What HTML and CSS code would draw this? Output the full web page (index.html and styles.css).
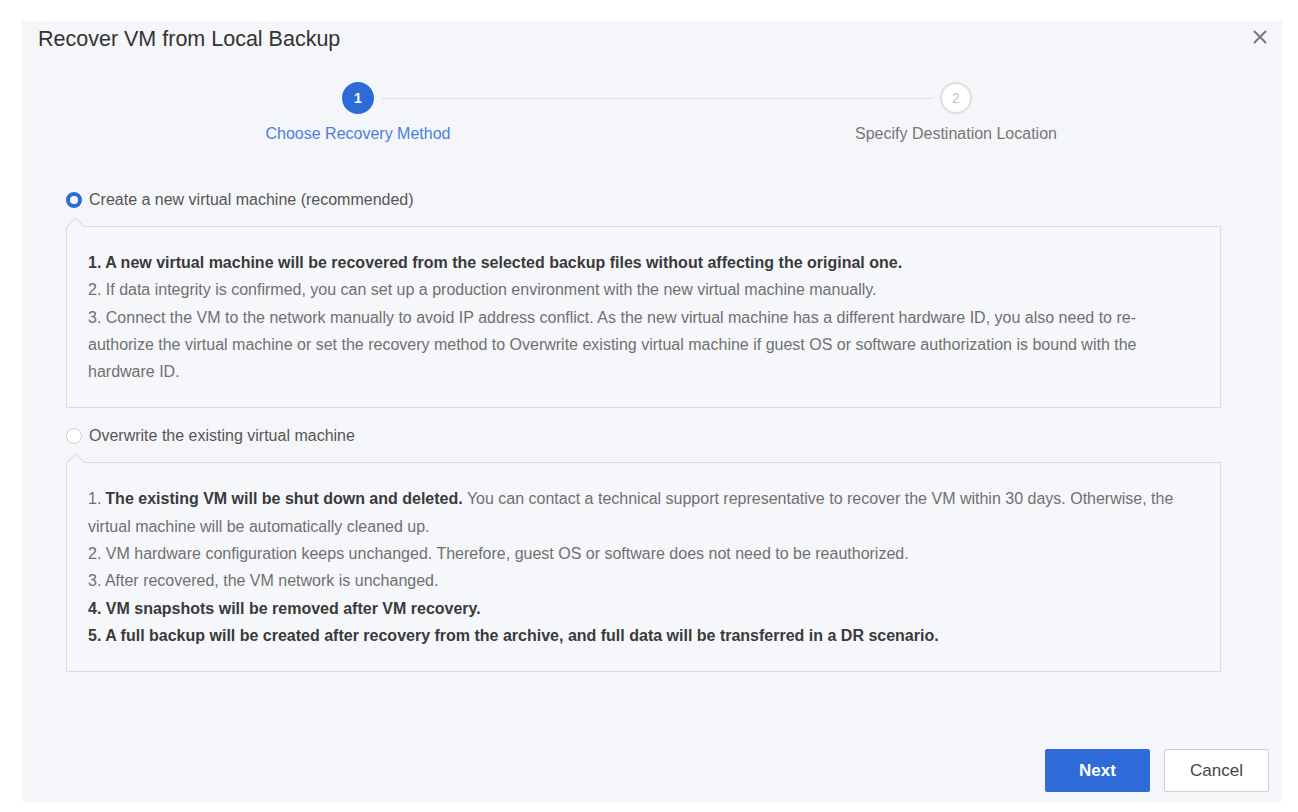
FILE: index.html
```html
<!DOCTYPE html>
<html lang="en">
<head>
    <meta charset="UTF-8">
    <title>Recover VM from Local Backup</title>
    <link rel="stylesheet" href="styles.css">
</head>
<body>
    <div class="dialog">
        <div class="dialog-header">
            <h1 class="dialog-title">Recover VM from Local Backup</h1>
            <button class="close-btn" type="button">
                <svg width="16" height="16" viewBox="0 0 16 16"><path d="M2 2L14 14M14 2L2 14" stroke="#7a7a7a" stroke-width="2" fill="none"/></svg>
            </button>
        </div>

        <div class="steps">
            <div class="step-dot active">1</div>
            <div class="step-line"></div>
            <div class="step-dot">2</div>
            <div class="step-label active">Choose Recovery Method</div>
            <div></div>
            <div class="step-label">Specify Destination Location</div>
        </div>

        <div class="dialog-body">
            <label class="radio-row"><span class="radio checked"></span>Create a new virtual machine (recommended)</label>
            <div class="tip-box">
                <p class="strong">1. A new virtual machine will be recovered from the selected backup files without affecting the original one.</p>
                <p>2. If data integrity is confirmed, you can set up a production environment with the new virtual machine manually.</p>
                <p>3. Connect the VM to the network manually to avoid IP address conflict. As the new virtual machine has a different hardware ID, you also need to re-authorize the virtual machine or set the recovery method to Overwrite existing virtual machine if guest OS or software authorization is bound with the hardware ID.</p>
            </div>

            <label class="radio-row"><span class="radio"></span>Overwrite the existing virtual machine</label>
            <div class="tip-box">
                <p><span class="num">1.</span><b>The existing VM will be shut down and deleted.</b> <span>You can contact a technical support representative to recover the VM within 30 days. Otherwise, the</span> <span>virtual machine will be automatically cleaned up.</span></p>
                <p>2. VM hardware configuration keeps unchanged. Therefore, guest OS or software does not need to be reauthorized.</p>
                <p>3. After recovered, the VM network is unchanged.</p>
                <p class="strong">4. VM snapshots will be removed after VM recovery.</p>
                <p class="strong">5. A full backup will be created after recovery from the archive, and full data will be transferred in a DR scenario.</p>
            </div>
        </div>

        <div class="dialog-footer">
            <button class="btn btn-primary" type="button">Next</button>
            <button class="btn" type="button">Cancel</button>
        </div>
    </div>
</body>
</html>
```

FILE: styles.css
```css
body {
    margin: 0;
    padding: 0;
    background: #fff;
    font-family: "Liberation Sans", Arial, sans-serif;
}
.dialog {
    width: 1260px;
    height: 781px;
    margin: 21px 0 0 22px;
    background: #f5f6f9;
    display: flex;
    flex-direction: column;
}
.dialog-header {
    display: flex;
    justify-content: space-between;
    align-items: flex-start;
    padding: 3px 14px 0 16px;
}
.dialog-title {
    margin: 0;
    font-size: 21.5px;
    font-weight: normal;
    line-height: 30px;
    color: #333;
}
.close-btn {
    margin-top: 5px;
    padding: 0;
    border: none;
    background: none;
    width: 16px;
    height: 16px;
    cursor: pointer;
}
.close-btn svg {
    display: block;
}
.steps {
    display: grid;
    grid-template-columns: 240px 358px 240px;
    grid-template-rows: 32px 20px;
    row-gap: 10px;
    margin: 28px 0 0 216px;
}
.step-dot {
    justify-self: center;
    width: 32px;
    height: 32px;
    box-sizing: border-box;
    border-radius: 50%;
    border: 2px solid #dedede;
    background: #fff;
    color: #c2c2c2;
    font-size: 14px;
    line-height: 28px;
    text-align: center;
}
.step-dot.active {
    border-color: #2e6bd9;
    background: #2e6bd9;
    color: #fff;
    font-weight: bold;
}
.step-line {
    align-self: center;
    margin: 0 -96px 0 -95px;
    border-top: 1px dotted #c9c9c9;
}
.step-label {
    text-align: center;
    font-size: 16px;
    line-height: 20px;
    color: #777;
}
.step-label.active {
    color: #4a7fdf;
}
.dialog-body {
    padding: 46px 61px 0 44px;
}
.radio-row {
    display: flex;
    align-items: center;
    height: 20px;
    font-size: 16px;
    color: #555;
}
.radio {
    width: 16px;
    height: 16px;
    box-sizing: border-box;
    border-radius: 50%;
    border: 1px solid #cfcfcf;
    background: #fff;
    margin-right: 7px;
}
.radio.checked {
    border: 4px solid #2e6bd9;
}
.tip-box {
    position: relative;
    margin: 16px 0 18px;
    padding: 22px 20px 22px 21px;
    border: 1px solid #dcdcdc;
    background: #f6f7fa;
    font-size: 16px;
    line-height: 27.3px;
    color: #707070;
}
.tip-box::before {
    content: "";
    position: absolute;
    left: 2px;
    top: -7px;
    width: 12px;
    height: 12px;
    border-top: 1px solid #dcdcdc;
    border-left: 1px solid #dcdcdc;
    background: #f6f7fa;
    transform: rotate(45deg);
}
.tip-box p {
    margin: 0;
}
.tip-box .num {
    margin-right: 4px;
}
.tip-box .strong, .tip-box b {
    font-weight: bold;
    color: #3a3a3a;
}
.dialog-footer {
    margin-top: auto;
    display: flex;
    justify-content: flex-end;
    gap: 14px;
    padding: 0 13px 10px 0;
}
.btn {
    width: 105px;
    height: 43px;
    font-family: "Liberation Sans", Arial, sans-serif;
    font-size: 17px;
    color: #444;
    background: #fff;
    border: 1px solid #cfcfcf;
    border-radius: 2px;
    cursor: pointer;
}
.btn-primary {
    background: #2e6bd9;
    border-color: #2e6bd9;
    color: #fff;
    font-weight: bold;
}
```
